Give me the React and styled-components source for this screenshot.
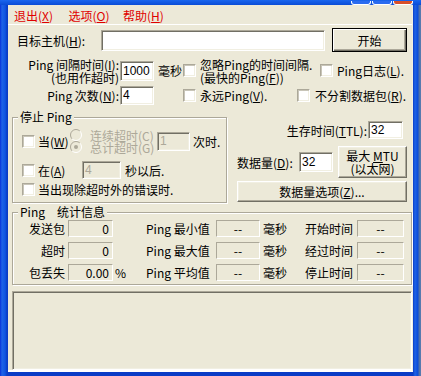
import React from 'react';
import styled, { createGlobalStyle, css } from 'styled-components';

const GlobalStyle = createGlobalStyle`
    html, body {
        margin: 0;
        padding: 0;
    }

    body {
        font-family: "Noto Sans CJK SC", "Liberation Sans", sans-serif;
        font-size: 12px;
        color: #000;
        background: #3A6EA5;
    }

    u {
        text-decoration-thickness: 1px;
        text-underline-offset: 1px;
    }
`;

// 窗口外框 (XP 蓝色边)
const Frame = styled.div`
    width: 421px;
    height: 376px;
    box-sizing: border-box;
    display: flex;
    flex-direction: column;
    padding: 0 8px 4px 8px;
    overflow: hidden;
    background: linear-gradient(to right, #0831D9 0, #1E63E6 2px, #0F56E2 5px, #0A3CC6 7px, #0A3CC6 413px, #1E63E6 415px, #0B4BD8 418px, #4A6FA8 419px, #5C7DB0 421px);
`;

const TitleStrip = styled.div`
    margin: 0 -8px;
    height: 5px;
    flex: none;
    display: flex;
    justify-content: flex-end;
    align-items: flex-end;
    gap: 1px;
    padding-right: 8px;
    background: linear-gradient(#1A66EE, #0A4CD6);
`;

const CapBtn = styled.span`
    width: 20px;
    height: 4px;
    box-sizing: border-box;
    border: 1px solid #fff;
    border-top: none;
    border-radius: 0 0 3px 3px;
    background: ${(p) => (p.$close ? '#D8502A' : '#2A6BF0')};
`;

const Client = styled.div`
    flex: 1;
    min-height: 0;
    display: flex;
    flex-direction: column;
    background: #ECE9D8;
    border-right: 1px solid #F1EFE2;
    border-bottom: 2px solid #fff;
`;

// 菜单
const MenuBar = styled.div`
    height: 20px;
    box-sizing: border-box;
    flex: none;
    display: flex;
    align-items: center;
    padding: 3px 0 0 6px;
    border-bottom: 1px solid #fff;
`;

const MenuItem = styled.span`
    width: 54.5px;
    color: #E00000;
    line-height: 14px;
    white-space: nowrap;
`;

const Row = styled.div`
    display: flex;
    align-items: center;
    flex: none;
    height: ${(p) => p.$h}px;
    margin-top: ${(p) => p.$mt || 0}px;
    padding-left: ${(p) => p.$pl || 0}px;
    ${(p) => p.$end && css`justify-content: flex-end;`}
`;

const Text = styled.span`
    line-height: 13px;
    white-space: nowrap;
    flex: none;
    color: ${(p) => (p.$dim ? '#ACA899' : '#000')};
    text-align: ${(p) => (p.$right ? 'right' : 'left')};
    ${(p) => p.$w && css`width: ${p.$w}px;`}
    ${(p) => p.$ml && css`margin-left: ${p.$ml}px;`}
`;

const Field = styled.div`
    box-sizing: border-box;
    flex: none;
    width: ${(p) => p.$w}px;
    height: ${(p) => p.$h || 20}px;
    margin-left: ${(p) => p.$ml || 0}px;
    display: flex;
    align-items: center;
    padding-left: 2px;
    font-family: "Liberation Sans", sans-serif;
    font-size: 12px;
    background: ${(p) => (p.$off ? '#ECE9D8' : '#fff')};
    color: ${(p) => (p.$off ? '#ACA899' : '#000')};
    border: 1px solid;
    border-color: #ACA899 #fff #fff #ACA899;
    box-shadow: inset 1px 1px 0 #716F64, inset -1px -1px 0 #F1EFE2;
`;

const Check = styled.span`
    box-sizing: border-box;
    flex: none;
    width: 13px;
    height: 13px;
    margin-left: ${(p) => p.$ml || 0}px;
    background: #fff;
    border: 1px solid;
    border-color: #ACA899 #fff #fff #ACA899;
    box-shadow: inset 1px 1px 0 #C8C5B8, inset -1px -1px 0 #F1EFE2;
`;

const Button = styled.div`
    box-sizing: border-box;
    flex: none;
    width: ${(p) => p.$w}px;
    height: ${(p) => p.$h}px;
    margin-left: ${(p) => p.$ml || 0}px;
    margin-top: ${(p) => p.$mt || 0}px;
    display: flex;
    align-items: center;
    justify-content: center;
    background: #ECE9D8;
    border: 1px solid;
    border-color: #fff #716F64 #716F64 #fff;
    box-shadow: inset -1px -1px 0 #ACA899, inset 1px 1px 0 #F1EFE2;
    ${(p) => p.$default && css`
        border-color: #000;
        box-shadow: inset 1px 1px 0 #fff, inset -1px -1px 0 #716F64, inset -2px -2px 0 #ACA899;
    `}
`;

const BtnLabel = styled.span`
    line-height: 13px;
    text-align: center;
    white-space: nowrap;
`;

// 分组框
const Group = styled.fieldset`
    box-sizing: border-box;
    flex: none;
    width: ${(p) => p.$w}px;
    margin: ${(p) => p.$mt || 0}px 0 0 ${(p) => p.$ml || 0}px;
    padding: ${(p) => p.$pt || 0}px 0 ${(p) => p.$pb || 0}px ${(p) => p.$pl}px;
    border: 1px solid #ACA899;
    box-shadow: inset 1px 1px 0 #fff, 1px 1px 0 #fff;
    min-inline-size: 0;
`;

const Legend = styled.legend`
    padding: 0 2px;
    margin-left: ${(p) => p.$ml}px;
    line-height: 14px;
    background: #ECE9D8;
    white-space: nowrap;
`;

const LegendGap = styled.span`
    display: inline-block;
    width: 12px;
`;

const Section = styled.div`
    display: flex;
    align-items: flex-start;
    margin-top: 5px;
    flex: none;
`;

const SideCol = styled.div`
    width: 170px;
    margin-left: 10px;
    padding-top: 11px;
    display: flex;
    flex-direction: column;
`;

const RadioCol = styled.div`
    width: 87px;
    flex: none;
    display: flex;
    flex-direction: column;
`;

const RadioItem = styled.div`
    display: flex;
    align-items: center;
    height: 12px;
    gap: 8px;
    color: #ACA899;
    white-space: nowrap;
`;

// 统计表
const StatGrid = styled.div`
    display: grid;
    grid-template-columns: 48px 45px 33px 70px 44px 45px 52px 47px;
    grid-auto-rows: 17px;
    row-gap: 5px;
    align-items: center;
`;

const StatLabel = styled.span`
    white-space: nowrap;
    line-height: 13px;
    text-align: ${(p) => (p.$right ? 'right' : 'left')};
    padding-right: ${(p) => (p.$right ? 3 : 0)}px;
    padding-left: ${(p) => p.$pl || 0}px;
`;

const StatBox = styled.div`
    box-sizing: border-box;
    height: 17px;
    display: flex;
    align-items: center;
    justify-content: ${(p) => (p.$center ? 'center' : 'flex-end')};
    padding: 0 3px;
    border: 1px solid;
    border-color: #ACA899 #fff #fff #ACA899;
    line-height: 13px;
`;

const LogPane = styled.div`
    flex: 1;
    margin: 6px 0 0 4px;
    background: #ECE9D8;
    border: 1px solid;
    border-color: #ACA899 #fff #fff #ACA899;
    box-shadow: inset 1px 1px 0 #716F64, inset -1px -1px 0 #F1EFE2;
`;

const Radio = ({ checked }) => (
    <svg width="12" height="12" viewBox="0 0 12 12">
        <circle cx="6" cy="6" r="5" fill="#ECE9D8" />
        <path d="M2.1 9.9A5.5 5.5 0 0 1 9.9 2.1" fill="none" stroke="#ACA899" />
        <path d="M9.9 2.1A5.5 5.5 0 0 1 2.1 9.9" fill="none" stroke="#fff" />
        {checked && <circle cx="6" cy="6" r="2" fill="#ACA899" />}
    </svg>
);

const stats = [
    { label: '发送包', value: '0', pct: '', name: 'Ping 最小值', time: '开始时间' },
    { label: '超时', value: '0', pct: '', name: 'Ping 最大值', time: '经过时间' },
    { label: '包丢失', value: '0.00', pct: '%', name: 'Ping 平均值', time: '停止时间' },
];

const App = () => (

    <Frame>
        <GlobalStyle />

        <TitleStrip>
            <CapBtn />
            <CapBtn />
            <CapBtn $close />
        </TitleStrip>

        <Client>
            <MenuBar>
                <MenuItem>退出(<u>X</u>)</MenuItem>
                <MenuItem>选项(<u>O</u>)</MenuItem>
                <MenuItem>帮助(<u>H</u>)</MenuItem>
            </MenuBar>

            <Row $h={24} $mt={3} $pl={9}>
                <Text $w={84}>目标主机(<u>H</u>):</Text>
                <Field $w={224} $h={21} />
                <Button $w={75} $h={24} $ml={7} $default>
                    <BtnLabel>开始</BtnLabel>
                </Button>
            </Row>

            <Row $h={27} $mt={5} $pl={9}>
                <Text $w={102} $right>Ping 间隔时间(<u>I</u>):<br />(也用作超时)</Text>
                <Field $w={34} $ml={1}>1000</Field>
                <Text $ml={4} $w={25}>毫秒</Text>
                <Check />
                <Text $ml={4} $w={120}>忽略Ping的时间间隔.<br />(最快的Ping(<u>F</u>))</Text>
                <Check />
                <Text $ml={4}>Ping日志(<u>L</u>).</Text>
            </Row>

            <Row $h={20} $mt={1} $pl={9}>
                <Text $w={102} $right>Ping 次数(<u>N</u>):</Text>
                <Field $w={34} $h={19} $ml={1}>4</Field>
                <Check $ml={29} />
                <Text $ml={4} $w={97}>永远Ping(<u>V</u>).</Text>
                <Check />
                <Text $ml={5}>不分割数据包(<u>R</u>).</Text>
            </Row>

            <Section>
                <Group $w={215} $ml={4} $pl={9} $pb={6}>
                    <Legend $ml={-4}>停止 Ping</Legend>

                    <Row $h={34}>
                        <Check />
                        <Text $ml={3} $w={32}>当(<u>W</u>)</Text>
                        <RadioCol>
                            <RadioItem><Radio />连续超时(C)</RadioItem>
                            <RadioItem><Radio checked />总计超时(G)</RadioItem>
                        </RadioCol>
                        <Field $w={33} $h={19} $off>1</Field>
                        <Text $ml={3}>次时.</Text>
                    </Row>

                    <Row $h={24}>
                        <Check />
                        <Text $ml={3} $w={44}>在(<u>A</u>)</Text>
                        <Field $w={39} $h={18} $off>4</Field>
                        <Text $ml={4}>秒以后.</Text>
                    </Row>

                    <Row $h={14}>
                        <Check />
                        <Text $ml={3}>当出现除超时外的错误时.</Text>
                    </Row>
                </Group>

                <SideCol>
                    <Row $h={18} $end>
                        <Text>生存时间(<u>T</u>TL):</Text>
                        <Field $w={35} $h={18} $ml={1}>32</Field>
                        <Text $w={4} />
                    </Row>

                    <Row $h={32} $mt={7}>
                        <Text $w={62}>数据量(<u>D</u>):</Text>
                        <Field $w={34}>32</Field>
                        <Button $w={69} $h={32} $ml={5}>
                            <BtnLabel>最大 <u>M</u>TU<br />(以太网)</BtnLabel>
                        </Button>
                    </Row>

                    <Button $w={170} $h={21} $mt={3}>
                        <BtnLabel>数据量选项(<u>Z</u>)...</BtnLabel>
                    </Button>
                </SideCol>
            </Section>

            <Group $w={400} $ml={4} $mt={2} $pl={7} $pt={1} $pb={3}>
                <Legend $ml={-2}>Ping<LegendGap />统计信息</Legend>
                <StatGrid>
                    {
                        stats.map((s) => (
                            <React.Fragment key={s.label}>
                                <StatLabel $right>{s.label}</StatLabel>
                                <StatBox>{s.value}</StatBox>
                                <StatLabel $pl={2}>{s.pct}</StatLabel>
                                <StatLabel>{s.name}</StatLabel>
                                <StatBox $center>--</StatBox>
                                <StatLabel $pl={3}>毫秒</StatLabel>
                                <StatLabel>{s.time}</StatLabel>
                                <StatBox $center>--</StatBox>
                            </React.Fragment>
                        ))
                    }
                </StatGrid>
            </Group>

            <LogPane />
        </Client>
    </Frame>

);

export default App;
